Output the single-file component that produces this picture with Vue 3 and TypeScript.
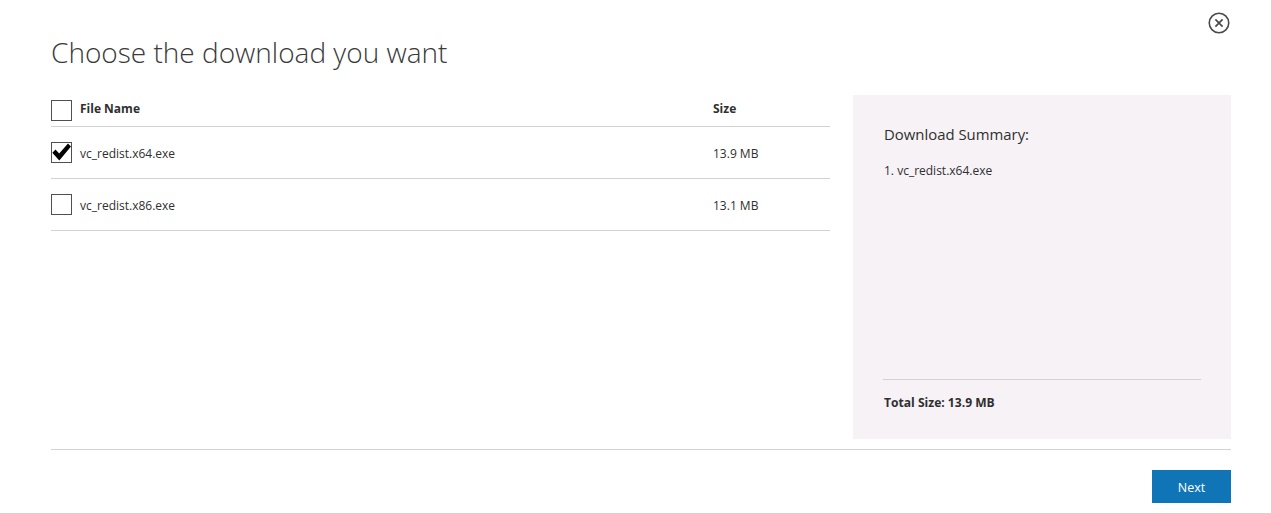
<script setup lang="ts">
import { computed, ref } from "vue";

type Download = { name: string; size: string; sizeMb: number; checked: boolean };

const files = ref<Download[]>([
  { name: "vc_redist.x64.exe", size: "13.9 MB", sizeMb: 13.9, checked: true },
  { name: "vc_redist.x86.exe", size: "13.1 MB", sizeMb: 13.1, checked: false },
]);

const selected = computed(() => files.value.filter((file) => file.checked));
const total = computed(() => selected.value.reduce((sum, file) => sum + file.sizeMb, 0).toFixed(1));
</script>

<template>
  <div class="page">
    <button class="close" aria-label="Close">
      <svg width="22" height="22" viewBox="0 0 22 22" fill="none" stroke="#4a4a4a">
        <circle cx="11" cy="11" r="9.75" stroke-width="1.6" />
        <path d="M7.4 7.4l7.2 7.2M14.6 7.4l-7.2 7.2" stroke-width="1.7" />
      </svg>
    </button>
    <h1 class="title">Choose the download you want</h1>
    <div class="content">
      <div class="table">
        <div class="row row--head">
          <span class="box" />
          <span class="name">File Name</span>
          <span class="size">Size</span>
        </div>
        <div v-for="file in files" :key="file.name" class="row">
          <span class="box">
            <svg v-if="file.checked" class="tick" width="21" height="21" viewBox="0 0 21 21">
              <path d="M1.3 10.8l3.2-3.2 3.7 3.9L17 1.6l3 3L8.3 18.6z" fill="#000" />
            </svg>
          </span>
          <span class="name">{{ file.name }}</span>
          <span class="size">{{ file.size }}</span>
        </div>
      </div>
      <aside class="summary">
        <h2 class="summary__title">Download Summary:</h2>
        <ol class="summary__list">
          <li v-for="file in selected" :key="file.name">{{ file.name }}</li>
        </ol>
        <div class="summary__total">Total Size: {{ total }} MB</div>
      </aside>
    </div>
    <div class="footer">
      <button class="next">Next</button>
    </div>
  </div>
</template>

<style>
body {
  background: #fff;
}
</style>

<style scoped>
.page {
  position: relative;
  width: 1271px;
  height: 513px;
  box-sizing: border-box;
  padding: 0 40px 0 51px;
  font-family: "Open Sans", "Noto Sans", sans-serif;
  font-size: 12px;
  color: #2f2f2f;
  overflow: hidden;
}

.close {
  position: absolute;
  top: 12px;
  right: 41px;
  width: 22px;
  height: 22px;
  padding: 0;
  border: 0;
  background: none;
}

.close svg {
  display: block;
}

.title {
  margin: 0;
  padding-top: 32px;
  height: 95px;
  box-sizing: border-box;
  font-size: 28px;
  line-height: 40px;
  font-weight: 300;
  color: #3a3a3a;
  white-space: nowrap;
}

.content {
  display: flex;
  justify-content: space-between;
  height: 344px;
}

.table {
  width: 779px;
}

.row {
  display: flex;
  align-items: center;
  height: 52px;
  box-sizing: border-box;
  border-bottom: 1px solid #d2d2d2;
  padding-bottom: 1px;
}

.row .name,
.row .size {
  margin-top: 2px;
}

.row--head {
  height: 32px;
  font-weight: 700;
}

.row--head .name,
.row--head .size {
  margin-top: 0;
  margin-bottom: 4px;
}

.box {
  flex: none;
  width: 21px;
  height: 21px;
  box-sizing: border-box;
  border: 1px solid #505050;
  position: relative;
}

.tick {
  position: absolute;
  left: -1px;
  top: -1px;
}

.name {
  margin-left: 8px;
  width: 633px;
}

.summary {
  width: 378px;
  box-sizing: border-box;
  background: #f6f2f6;
  padding: 29px 30px 0;
  display: flex;
  flex-direction: column;
}

.summary__title {
  margin: 0 0 0 1px;
  font-size: 14.9px;
  line-height: 20px;
  font-weight: 400;
}

.summary__list {
  margin: 18px 0 0 1px;
  padding: 0;
  list-style-position: inside;
  line-height: 18px;
  flex: 1;
}

.summary__total {
  border-top: 1px solid #d4d0d4;
  height: 60px;
  padding-top: 14px;
  padding-left: 1px;
  box-sizing: border-box;
  font-weight: 700;
  line-height: 18px;
  font-size: 12.1px;
}

.footer {
  margin-top: 10px;
  border-top: 1px solid #d2d2d2;
  padding-top: 20px;
  display: flex;
  justify-content: flex-end;
}

.next {
  width: 79px;
  height: 33px;
  border: 0;
  padding: 2px 0 0;
  background: #0f75b7;
  color: #fff;
  font: inherit;
  font-size: 12.5px;
}
</style>
